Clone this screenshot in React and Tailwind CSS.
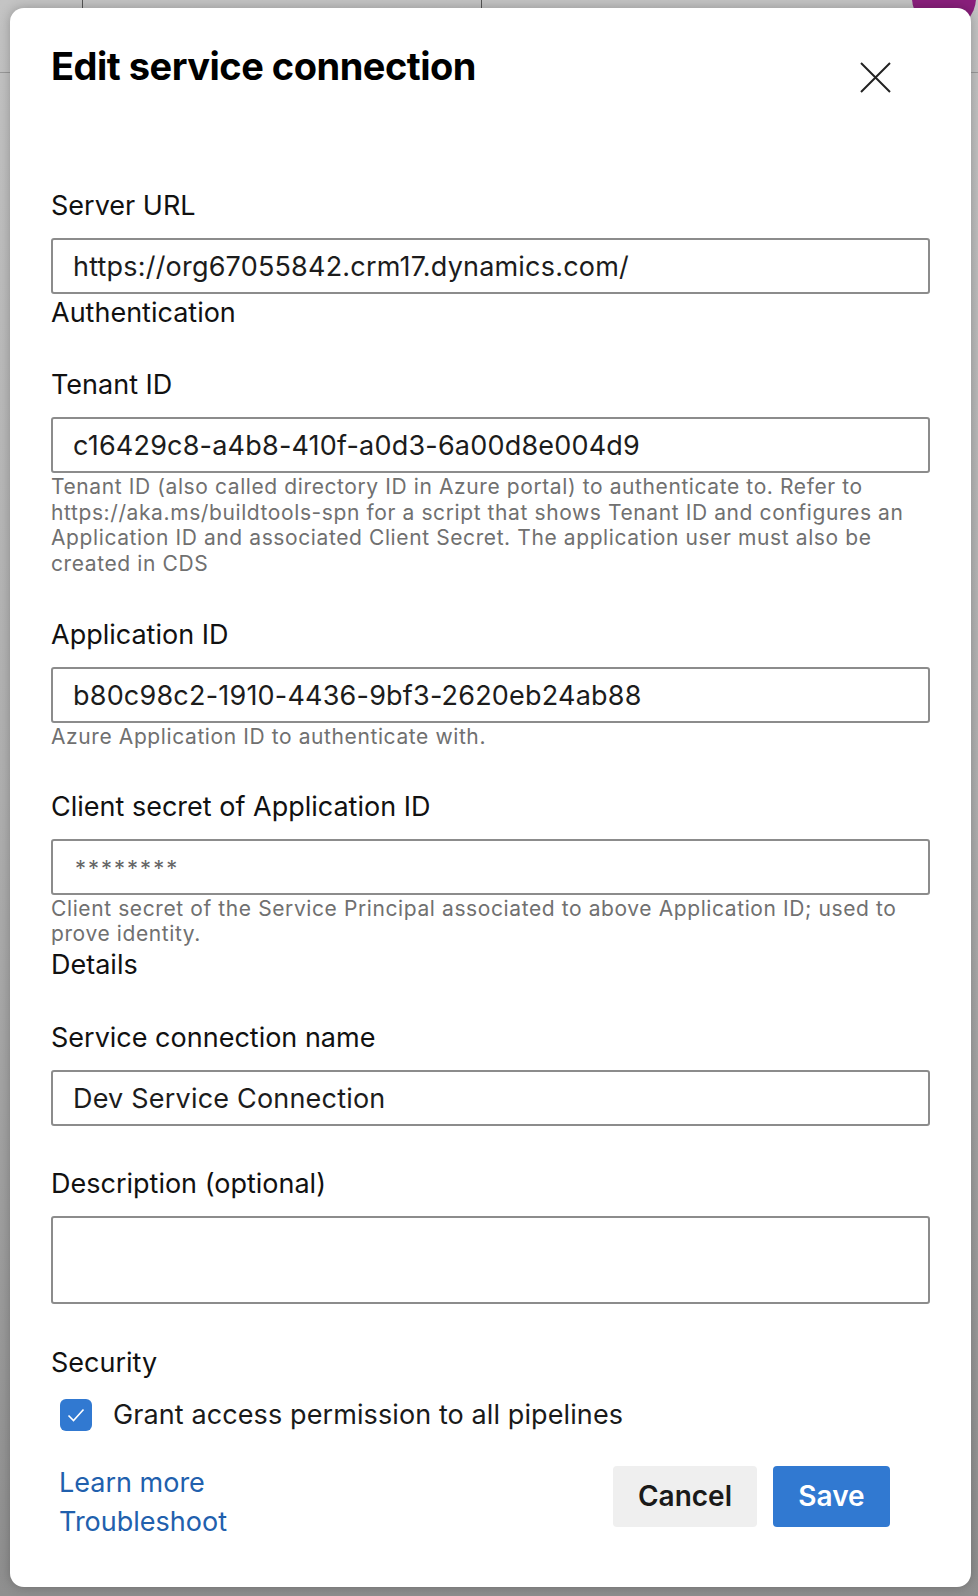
import { useState } from 'react'

const FONT = { fontFamily: 'Inter, "Noto Sans", "Liberation Sans", sans-serif' }

function Label({ children, className = '' }) {
  return <div className={`text-[27px] leading-[32px] text-[#111] ${className}`}>{children}</div>
}

function Field({ value, muted, tall }) {
  return (
    <div
      className={`mt-4 flex rounded-[3px] border-2 border-[#8c8c8c] bg-white px-[20px] ${tall ? 'h-[88px] items-start' : 'h-[56px] items-center'}`}
    >
      {muted ? (
        <span className="mt-[3px] pl-[2px] text-[22px] leading-[22px] tracking-[2px] text-[#666]">{value}</span>
      ) : (
        <span className="pt-[2px] text-[27px] leading-[32px] tracking-[0.2px] text-[#1c1c1c]">{value}</span>
      )}
    </div>
  )
}

function Help({ children }) {
  return <p className="mt-[1px] text-[21px] leading-[25.5px] tracking-[0.6px] text-[#707070]">{children}</p>
}

export default function App() {
  const [granted, setGranted] = useState(true)

  return (
    <div className="relative min-h-[1596px] w-[978px] overflow-hidden bg-gradient-to-b from-[#c4c4c4] via-[#b0b0b0] to-[#8f8f8f]" style={FONT}>
      {/* ─── Page behind the dialog ─────────────────────────────────────── */}
      <div className="absolute left-[82px] top-0 h-[8px] w-px bg-[#555]" />
      <div className="absolute left-[481px] top-0 h-[8px] w-px bg-[#555]" />
      <div className="absolute left-0 top-[72px] h-px w-[978px] bg-[#999]" />
      <div className="absolute -top-[34px] left-[912px] h-[64px] w-[64px] rounded-full bg-[#8a1f7c]" />

      <div className="relative pl-[10px] pt-[8px]">
        <div className="flex h-[1579px] w-[961px] flex-col rounded-[14px] bg-white pl-[41px] pr-[41px] pt-[36px] shadow-[0_0_12px_rgba(0,0,0,0.25)]">
          {/* Header */}
          <div className="flex items-start justify-between pr-[39px]">
            <h1 className="text-[38px] font-bold leading-[44px] tracking-[-0.5px] text-black">Edit service connection</h1>
            <button className="mt-[18px] text-[#222]">
              <svg width="31" height="31" viewBox="0 0 31 31" fill="none" stroke="currentColor" strokeWidth="2">
                <path d="M1 1 L30 30 M30 1 L1 30" />
              </svg>
            </button>
          </div>

          {/* Server URL */}
          <Label className="mt-[97px]">Server URL</Label>
          <Field value="https://org67055842.crm17.dynamics.com/" />
          <Label className="mt-[3px]">Authentication</Label>

          {/* Tenant */}
          <Label className="mt-[40px]">Tenant ID</Label>
          <Field value="c16429c8-a4b8-410f-a0d3-6a00d8e004d9" />
          <Help>
            Tenant ID (also called directory ID in Azure portal) to authenticate to. Refer to
            https://aka.ms/buildtools-spn for a script that shows Tenant ID and configures an
            Application ID and associated Client Secret. The application user must also be
            created in CDS
          </Help>

          {/* Application */}
          <Label className="mt-[43px]">Application ID</Label>
          <Field value="b80c98c2-1910-4436-9bf3-2620eb24ab88" />
          <Help>Azure Application ID to authenticate with.</Help>

          {/* Secret */}
          <Label className="mt-[41px]">Client secret of Application ID</Label>
          <Field value="********" muted />
          <Help>
            Client secret of the Service Principal associated to above Application ID; used to
            prove identity.
          </Help>
          <Label className="mt-[2px]">Details</Label>

          {/* Details */}
          <Label className="mt-[41px]">Service connection name</Label>
          <Field value="Dev Service Connection" />

          <Label className="mt-[42px]">Description (optional)</Label>
          <Field value="" tall />

          {/* Security */}
          <Label className="mt-[43px]">Security</Label>
          <label className="mt-[20px] ml-[9px] flex cursor-pointer items-center gap-[21px]">
            <button
              onClick={() => setGranted(!granted)}
              className={`flex h-[32px] w-[32px] items-center justify-center rounded-[6px] ${granted ? 'bg-[#3179d1]' : 'border-2 border-[#8c8c8c] bg-white'}`}
            >
              {granted && (
                <svg width="18" height="14" viewBox="0 0 18 14" fill="none" stroke="white" strokeWidth="1.6">
                  <path d="M1.5 7.5 L6.5 12.5 L16.5 1.5" />
                </svg>
              )}
            </button>
            <span className="text-[27px] leading-[32px] tracking-[0.1px] text-[#1a1a1a]">Grant access permission to all pipelines</span>
          </label>

          {/* Footer */}
          <div className="mt-[32px] flex items-start justify-between pl-[8px] pr-[40px]">
            <div className="flex flex-col text-[27px] leading-[39px] text-[#2160ad]">
              <a href="#">Learn more</a>
              <a href="#">Troubleshoot</a>
            </div>
            <div className="mt-[3px] flex gap-4">
              <button className="h-[61px] w-[144px] rounded-[4px] bg-[#efefef] text-[28px] font-semibold text-[#1a1a1a]">Cancel</button>
              <button className="h-[61px] w-[117px] rounded-[4px] bg-[#3179d1] text-[28px] font-semibold text-white">Save</button>
            </div>
          </div>
        </div>
      </div>
    </div>
  )
}
